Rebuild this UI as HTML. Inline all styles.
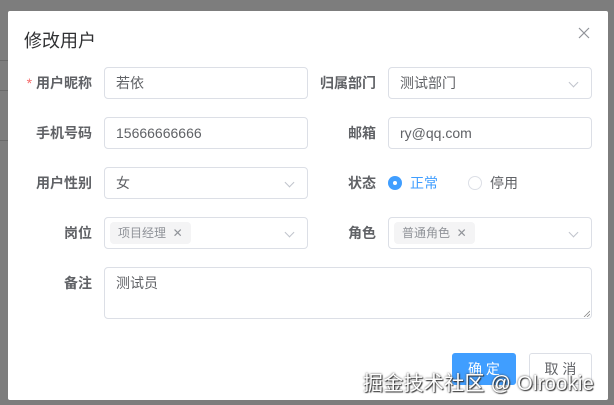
<!DOCTYPE html>
<html><head><meta charset="utf-8"><style>
*{box-sizing:border-box;margin:0;padding:0}
body{width:614px;height:405px;overflow:hidden;background:#7d7d7d;font-family:"Liberation Sans","Noto Sans CJK SC",sans-serif;position:relative}
.bgline{position:absolute;left:0;width:8px;height:1px;background:#6a6a6a}
.dlg{position:absolute;left:8px;top:11px;width:600px;height:389px;background:#fff;border-radius:2px}
.abs{position:absolute}
.title{left:16px;top:16px;font-size:18px;color:#303133}
.lbl{font-size:14px;font-weight:bold;color:#606266;text-align:right;width:80px;line-height:32px}
.inp{border:1px solid #dcdfe6;border-radius:4px;height:32px;font-size:14px;color:#606266;line-height:30px;padding-left:11px}
.arrow{position:absolute;right:14px;top:11px;width:7px;height:7px;border-right:1px solid #c0c4cc;border-bottom:1px solid #c0c4cc;transform:rotate(45deg)}
.tag{position:absolute;left:5px;top:4px;height:22px;line-height:22px;background:#f4f4f5;border-radius:4px;font-size:12px;color:#909399;padding:0 8px}
.btn{height:32px;border-radius:3px;font-size:14px;text-align:center;line-height:30px}
</style></head><body>
<div class="bgline" style="top:60px"></div><div class="bgline" style="top:90px"></div><div class="bgline" style="top:140px"></div>
<div class="dlg">
<div class="abs title">修改用户</div>
<svg class="abs" style="left:570px;top:16px" width="12" height="12" viewBox="0 0 12 12"><path d="M1 1L11 11M11 1L1 11" stroke="#909399" stroke-width="1.2"/></svg>

<div class="abs lbl" style="left:4px;top:56px"><span style="color:#f56c6c;font-weight:normal">*</span> 用户昵称</div>
<div class="abs inp" style="left:96px;top:56px;width:204px">若依</div>
<div class="abs lbl" style="left:288px;top:56px">归属部门</div>
<div class="abs inp" style="left:380px;top:56px;width:204px">测试部门<span class="arrow"></span></div>

<div class="abs lbl" style="left:4px;top:106px">手机号码</div>
<div class="abs inp" style="left:96px;top:106px;width:204px">15666666666</div>
<div class="abs lbl" style="left:288px;top:106px">邮箱</div>
<div class="abs inp" style="left:380px;top:106px;width:204px">ry@qq.com</div>

<div class="abs lbl" style="left:4px;top:156px">用户性别</div>
<div class="abs inp" style="left:96px;top:156px;width:204px">女<span class="arrow"></span></div>
<div class="abs lbl" style="left:288px;top:156px">状态</div>
<div class="abs" style="left:380px;top:165px;width:14px;height:14px;border-radius:50%;background:#409eff"><div style="position:absolute;left:5px;top:5px;width:4px;height:4px;border-radius:50%;background:#fff"></div></div>
<div class="abs" style="left:402px;top:156px;line-height:32px;font-size:14px;color:#409eff">正常</div>
<div class="abs" style="left:460px;top:165px;width:14px;height:14px;border-radius:50%;border:1px solid #dcdfe6"></div>
<div class="abs" style="left:482px;top:156px;line-height:32px;font-size:14px;color:#606266">停用</div>

<div class="abs lbl" style="left:4px;top:206px">岗位</div>
<div class="abs inp" style="left:96px;top:206px;width:204px"><span class="tag">项目经理 &nbsp;✕</span><span class="arrow"></span></div>
<div class="abs lbl" style="left:288px;top:206px">角色</div>
<div class="abs inp" style="left:380px;top:206px;width:204px"><span class="tag">普通角色 &nbsp;✕</span><span class="arrow"></span></div>

<div class="abs lbl" style="left:4px;top:256px">备注</div>
<div class="abs inp" style="left:96px;top:256px;width:488px;height:52px;line-height:20px;padding-top:5px">测试员
<svg style="position:absolute;right:1px;bottom:1px" width="7" height="7" viewBox="0 0 7 7"><path d="M7 1L1 7M7 4L4 7" stroke="#888" stroke-width="0.8"/></svg></div>

<div class="abs btn" style="left:444px;top:342px;width:64px;background:#409eff;color:#fff;border:1px solid #409eff">确 定</div>
<div class="abs btn" style="left:521px;top:342px;width:63px;border:1px solid #dcdfe6;color:#606266">取 消</div>
</div>
<div class="abs" style="left:363px;top:367px;font-size:20px;letter-spacing:0.3px;color:#fff;text-shadow:0 0 2px #444,1px 1px 1px #333;white-space:nowrap">掘金技术社区 @ Olrookie</div>
</body></html>
